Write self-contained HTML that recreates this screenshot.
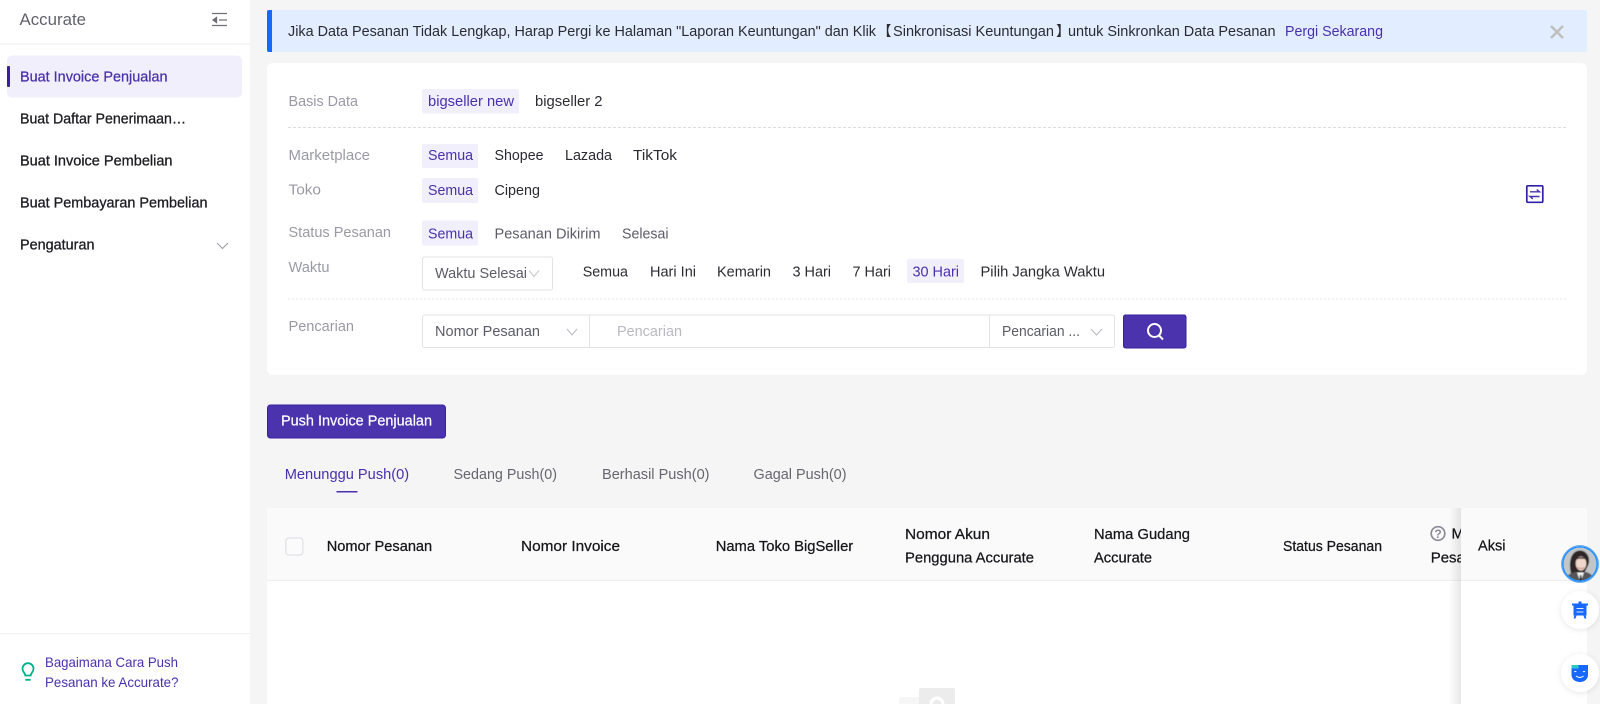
<!DOCTYPE html>
<html lang="id">
<head>
<meta charset="utf-8">
<title>Accurate</title>
<style>
html,body{margin:0;padding:0;width:1600px;height:704px;overflow:hidden;background:#f5f5f5}
svg{display:block}
text{font-family:"Liberation Sans","Noto Sans CJK SC",sans-serif;font-size:14.7px;fill:#2b2b33}
.nav{fill:#1c1c22;stroke:#1c1c22;stroke-width:.3px}
.lab{fill:#9a9aa6}
.pur{fill:#4a30ad}
.sec{fill:#5c5c68}
.th{fill:#15151a;stroke:#15151a;stroke-width:.25px;font-size:15px}
.ph{fill:#b9b9bf}
</style>
</head>
<body>
<svg width="1600" height="704" viewBox="0 0 1600 704" xmlns="http://www.w3.org/2000/svg">
<defs>
<filter id="sh" x="-40%" y="-40%" width="180%" height="180%"><feDropShadow dx="0" dy="1" stdDeviation="3" flood-color="#000" flood-opacity=".1"/></filter>
<filter id="soft" x="-10%" y="-10%" width="120%" height="120%"><feGaussianBlur stdDeviation=".45"/></filter>
<linearGradient id="ps" x1="0" x2="1" y1="0" y2="0"><stop offset="0" stop-color="#000" stop-opacity="0"/><stop offset="1" stop-color="#000" stop-opacity=".09"/></linearGradient>
<clipPath id="av"><circle cx="1580" cy="564" r="16.5"/></clipPath>
<clipPath id="thc"><rect x="267" y="508" width="1194" height="73"/></clipPath>
<clipPath id="emp"><rect x="880" y="680" width="100" height="24"/></clipPath>
</defs>

<rect width="1600" height="704" fill="#f5f5f5"/>

<!-- Sidebar -->
<rect x="0" y="0" width="250" height="704" fill="#fff"/>
<rect x="0" y="43.5" width="250" height="1" fill="#eeeeee"/>
<text x="19.5" y="25" style="font-size:16.8px;fill:#62626e" textLength="66.5" lengthAdjust="spacingAndGlyphs">Accurate</text>
<g stroke="#6f6f7a" stroke-width="1.3" fill="none">
<path d="M212 13.5H227M219 20H227M212 25.5H227"/>
<path d="M216.5 17.5L213 20l3.5 2.5z" fill="#6f6f7a"/>
</g>
<rect x="7" y="55.5" width="235" height="42" rx="5" fill="#f1effc"/>
<rect x="7" y="66" width="3" height="21" rx="1" fill="#3a1f9f"/>
<text x="20" y="81.5" class="pur" style="stroke:#4a30ad;stroke-width:.25px" textLength="147.5" lengthAdjust="spacingAndGlyphs">Buat Invoice Penjualan</text>
<text x="20" y="123.5" class="nav" textLength="166" lengthAdjust="spacingAndGlyphs">Buat Daftar Penerimaan…</text>
<text x="20" y="165.5" class="nav" textLength="152.5" lengthAdjust="spacingAndGlyphs">Buat Invoice Pembelian</text>
<text x="20" y="207.5" class="nav" textLength="187.5" lengthAdjust="spacingAndGlyphs">Buat Pembayaran Pembelian</text>
<text x="20" y="249.5" class="nav" textLength="74.5" lengthAdjust="spacingAndGlyphs">Pengaturan</text>
<path d="M217 243l5.5 5.5 5.5-5.5" fill="none" stroke="#9a9aa6" stroke-width="1"/>

<rect x="0" y="633" width="250" height="1" fill="#f0f0f0"/>
<g fill="none" stroke="#00b38a" stroke-width="1.8">
<path d="M25.300 675.500c0-2.500-2.800-3.400-2.800-6.800a5.500 5.500 0 0 1 11 0c0 3.400-2.800 4.300-2.800 6.800z"/>
<path d="M25.300 679.800h5.400"/>
</g>
<text x="45" y="667" class="pur" style="font-size:13.600px" textLength="133" lengthAdjust="spacingAndGlyphs">Bagaimana Cara Push</text>
<text x="45" y="687" class="pur" style="font-size:13.600px" textLength="133.500" lengthAdjust="spacingAndGlyphs">Pesanan ke Accurate?</text>

<!-- Banner -->
<rect x="267" y="10" width="1320" height="42" rx="2" fill="#e2eeff"/>
<path d="M269 10h3v42h-3a2 2 0 0 1-2-2V12a2 2 0 0 1 2-2z" fill="#1668ff"/>
<text x="288" y="36" textLength="588" lengthAdjust="spacingAndGlyphs">Jika Data Pesanan Tidak Lengkap, Harap Pergi ke Halaman "Laporan Keuntungan" dan Klik</text>
<text x="877.500" y="36" style="font-size:14px">【</text>
<text x="893" y="36" textLength="161" lengthAdjust="spacingAndGlyphs">Sinkronisasi Keuntungan</text>
<text x="1056" y="36" style="font-size:14px">】</text>
<text x="1068" y="36" textLength="207.500" lengthAdjust="spacingAndGlyphs">untuk Sinkronkan Data Pesanan</text>
<text x="1285" y="36" class="pur" textLength="98" lengthAdjust="spacingAndGlyphs">Pergi Sekarang</text>
<path d="M1551 26l12 12M1563 26l-12 12" stroke="#bfbfbf" stroke-width="2.600" fill="none"/>

<!-- Filter card -->
<rect x="267" y="63" width="1320" height="312" rx="6" fill="#fff"/>

<text x="288.500" y="106" class="lab" textLength="69.500" lengthAdjust="spacingAndGlyphs">Basis Data</text>
<rect x="422" y="89" width="97" height="24.500" rx="2" fill="#f1effc"/>
<text x="428" y="106" class="pur" textLength="86" lengthAdjust="spacingAndGlyphs">bigseller new</text>
<text x="535" y="106" textLength="67.500" lengthAdjust="spacingAndGlyphs">bigseller 2</text>

<path d="M288 127.500H1567" stroke="#dcdcdc" stroke-width="1" stroke-dasharray="3 2"/>

<text x="288.500" y="160" class="lab" textLength="81.500" lengthAdjust="spacingAndGlyphs">Marketplace</text>
<rect x="422" y="144" width="56" height="24" rx="2" fill="#f1effc"/>
<text x="428" y="160" class="pur" textLength="45" lengthAdjust="spacingAndGlyphs">Semua</text>
<text x="494.500" y="160" textLength="49" lengthAdjust="spacingAndGlyphs">Shopee</text>
<text x="565" y="160" textLength="47" lengthAdjust="spacingAndGlyphs">Lazada</text>
<text x="633" y="160" textLength="44" lengthAdjust="spacingAndGlyphs">TikTok</text>

<text x="288.500" y="194.500" class="lab" textLength="32.500" lengthAdjust="spacingAndGlyphs">Toko</text>
<rect x="422" y="178" width="56" height="25" rx="2" fill="#f1effc"/>
<text x="428" y="195" class="pur" textLength="45" lengthAdjust="spacingAndGlyphs">Semua</text>
<text x="494.500" y="195" textLength="45.500" lengthAdjust="spacingAndGlyphs">Cipeng</text>

<text x="288.500" y="237" class="lab" textLength="102.500" lengthAdjust="spacingAndGlyphs">Status Pesanan</text>
<rect x="422" y="220.500" width="56" height="25" rx="2" fill="#f1effc"/>
<text x="428" y="238.500" class="pur" textLength="45" lengthAdjust="spacingAndGlyphs">Semua</text>
<text x="494.500" y="238.500" class="sec" textLength="106" lengthAdjust="spacingAndGlyphs">Pesanan Dikirim</text>
<text x="622" y="238.500" class="sec" textLength="46.500" lengthAdjust="spacingAndGlyphs">Selesai</text>

<text x="288.500" y="272" class="lab" textLength="41" lengthAdjust="spacingAndGlyphs">Waktu</text>
<rect x="422.500" y="257" width="130" height="33" rx="2" fill="#fff" stroke="#e3e3e3"/>
<text x="435" y="278" class="sec" textLength="92" lengthAdjust="spacingAndGlyphs">Waktu Selesai</text>
<path d="M529 270.500l5 6 5-6" fill="none" stroke="#c4c4c8" stroke-width="1"/>
<text x="582.700" y="276.700" textLength="45.300" lengthAdjust="spacingAndGlyphs">Semua</text>
<text x="650" y="276.700" textLength="46" lengthAdjust="spacingAndGlyphs">Hari Ini</text>
<text x="717" y="276.700" textLength="54" lengthAdjust="spacingAndGlyphs">Kemarin</text>
<text x="792.500" y="276.700" textLength="38.500" lengthAdjust="spacingAndGlyphs">3 Hari</text>
<text x="852.500" y="276.700" textLength="38.500" lengthAdjust="spacingAndGlyphs">7 Hari</text>
<rect x="907" y="259" width="57" height="24" rx="2" fill="#f1effc"/>
<text x="912.500" y="276.700" class="pur" textLength="46.500" lengthAdjust="spacingAndGlyphs">30 Hari</text>
<text x="980.500" y="276.700" textLength="124.500" lengthAdjust="spacingAndGlyphs">Pilih Jangka Waktu</text>

<path d="M288 299H1567" stroke="#e4e4e4" stroke-width="1" stroke-dasharray="2 2"/>

<text x="288.500" y="331" class="lab" textLength="65.500" lengthAdjust="spacingAndGlyphs">Pencarian</text>
<rect x="422.500" y="315" width="692" height="32.500" rx="2" fill="#fff" stroke="#e3e3e3"/>
<path d="M589.500 315v32.500M989.500 315v32.500" stroke="#e3e3e3"/>
<text x="435" y="336" class="sec" textLength="105" lengthAdjust="spacingAndGlyphs">Nomor Pesanan</text>
<path d="M567 329l5 6 5-6" fill="none" stroke="#b9b9bf" stroke-width="1"/>
<text x="617" y="336" class="ph" textLength="65" lengthAdjust="spacingAndGlyphs">Pencarian</text>
<text x="1002" y="336" class="sec" textLength="78" lengthAdjust="spacingAndGlyphs">Pencarian ...</text>
<path d="M1091 329l5.500 6 5.500-6" fill="none" stroke="#b9b9bf" stroke-width="1"/>
<rect x="1123.500" y="315" width="62.500" height="33" rx="2" fill="#4a33ad" stroke="#3a1fa0"/>
<circle cx="1154.500" cy="330.500" r="6.500" fill="none" stroke="#fff" stroke-width="2"/>
<path d="M1159 335.500l4 4" stroke="#fff" stroke-width="2" fill="none"/>

<rect x="1526.800" y="185.800" width="16" height="16.500" rx="1" fill="none" stroke="#2f22a8" stroke-width="1.700"/>
<path d="M1530 191.800h9.500l-2.800-2.300M1539.500 196.500H1530l2.800 2.300" fill="none" stroke="#4a30ad" stroke-width="1.400"/>

<!-- Push button and tabs -->
<rect x="267.500" y="405" width="178" height="33" rx="3" fill="#4a33ad" stroke="#3a1fa0"/>
<text x="281" y="425.500" style="fill:#fff;stroke:#fff;stroke-width:.2px" textLength="151" lengthAdjust="spacingAndGlyphs">Push Invoice Penjualan</text>

<text x="284.700" y="479" class="pur" textLength="124.500" lengthAdjust="spacingAndGlyphs">Menunggu Push(0)</text>
<rect x="336.500" y="491" width="21" height="1.500" fill="#4a30ad"/>
<text x="453.500" y="479" style="fill:#666670" textLength="103.500" lengthAdjust="spacingAndGlyphs">Sedang Push(0)</text>
<text x="602" y="479" style="fill:#666670" textLength="107.500" lengthAdjust="spacingAndGlyphs">Berhasil Push(0)</text>
<text x="753.500" y="479" style="fill:#666670" textLength="93" lengthAdjust="spacingAndGlyphs">Gagal Push(0)</text>

<!-- Table -->
<rect x="267" y="508" width="1320" height="196" fill="#fff"/>
<rect x="267" y="508" width="1320" height="72" fill="#fafafa"/>
<rect x="267" y="580" width="1320" height="1" fill="#efefef"/>
<rect x="285.800" y="538" width="17" height="17" rx="3" fill="#fbfbfb" stroke="#e0e2e7" stroke-width="1.300"/>

<text x="326.700" y="551" class="th" textLength="105.500" lengthAdjust="spacingAndGlyphs">Nomor Pesanan</text>
<text x="521" y="551" class="th" textLength="99" lengthAdjust="spacingAndGlyphs">Nomor Invoice</text>
<text x="715.700" y="551" class="th" textLength="137.500" lengthAdjust="spacingAndGlyphs">Nama Toko BigSeller</text>
<text x="905" y="539" class="th" textLength="85" lengthAdjust="spacingAndGlyphs">Nomor Akun</text>
<text x="905" y="562.500" class="th" textLength="129" lengthAdjust="spacingAndGlyphs">Pengguna Accurate</text>
<text x="1094" y="539" class="th" textLength="96" lengthAdjust="spacingAndGlyphs">Nama Gudang</text>
<text x="1094" y="562.500" class="th" textLength="58" lengthAdjust="spacingAndGlyphs">Accurate</text>
<text x="1283" y="551" class="th" textLength="99" lengthAdjust="spacingAndGlyphs">Status Pesanan</text>
<g clip-path="url(#thc)">
<circle cx="1438" cy="533.500" r="6.800" fill="none" stroke="#8a8a99" stroke-width="1.700"/>
<text x="1438" y="537.800" text-anchor="middle" style="font-size:12px;fill:#8a8a99;font-weight:bold">?</text>
<text x="1451.500" y="538.500" class="th">M</text>
<text x="1430.700" y="562.500" class="th">Pesanan</text>
</g>

<!-- Fixed action column -->
<rect x="1449" y="508" width="12" height="196" fill="url(#ps)"/>
<rect x="1461" y="508" width="126" height="196" fill="#fff"/>
<rect x="1461" y="508" width="126" height="72" fill="#fafafa"/>
<rect x="1461" y="580" width="126" height="1" fill="#efefef"/>
<text x="1478" y="550.700" class="th" textLength="27.500" lengthAdjust="spacingAndGlyphs">Aksi</text>

<!-- Empty state illustration -->
<g clip-path="url(#emp)">
<rect x="899" y="697" width="24" height="12" rx="2" fill="#f6f6f6"/>
<rect x="919" y="688" width="36" height="30" rx="2" fill="#ececec"/>
<path d="M931 704a6 6 0 0 1 12 0" fill="none" stroke="#fff" stroke-width="3"/>
</g>

<!-- Floating support buttons -->
<circle cx="1580" cy="564" r="18" fill="#fff"/>
<g clip-path="url(#av)">
<g filter="url(#soft)">
<rect x="1560" y="544" width="40" height="40" fill="#c3c6c8"/>
<path d="M1571 574c-1-6-1.500-9-.5-14 1-6 5-9.500 9.500-9.500s8.500 3.500 9 9c.3 3-.5 5-1.500 7l-3 6z" fill="#2e2826"/>
<ellipse cx="1581" cy="563.500" rx="5.300" ry="7" fill="#efd7cc"/>
<path d="M1575.500 560c2-3.500 8-4 11-.5-3.500-1-8-1.500-11 .5z" fill="#2e2826"/>
<path d="M1577.500 567.500q3.500 2 7 0" fill="none" stroke="#c9736f" stroke-width=".9"/>
<path d="M1565 582c.5-6 5-9 10-10l5.500 1 5.500-1c4 1 8 4 9 10z" fill="#55555a"/>
<path d="M1577 572.500h7l-3.500 9.500z" fill="#f4f4f4"/>
<path d="M1580 575h1.400l.6 7h-2.600z" fill="#222"/>
</g>
</g>
<circle cx="1580" cy="564" r="17.200" fill="none" stroke="#1e90ff" stroke-width="1.600"/>
<circle cx="1580" cy="564" r="18.500" fill="none" stroke="#0f6fe0" stroke-width=".5"/>

<circle cx="1580" cy="610" r="19" fill="#fff" filter="url(#sh)"/>
<path d="M1572 603.500h16v2h-1.500v10h-13v-10H1572z" fill="#1668ff"/>
<path d="M1578.500 601.500h3v2h-3zM1574.500 615.500h2l-1 3h-2zM1583.500 615.500h2l1 3h-2z" fill="#1668ff"/>
<path d="M1576.500 608.500h7M1576.500 612h7" stroke="#dfeaff" stroke-width="1.100"/>

<circle cx="1580" cy="673" r="19" fill="#fff" filter="url(#sh)"/>
<path d="M1571.500 665h16.500v10c0 4-3.500 7-8 7-4.800 0-8.500-3-8.500-7z" fill="#1668ff"/>
<path d="M1571.500 665h7v3.500h-7z" fill="#2bc8c8"/>
<path d="M1574.300 672q1-1.300 2 0M1583 672q1-1.300 2 0M1576 676q3.700 3 7.500 0" fill="none" stroke="#fff" stroke-width="1"/>
</svg>
</body>
</html>
